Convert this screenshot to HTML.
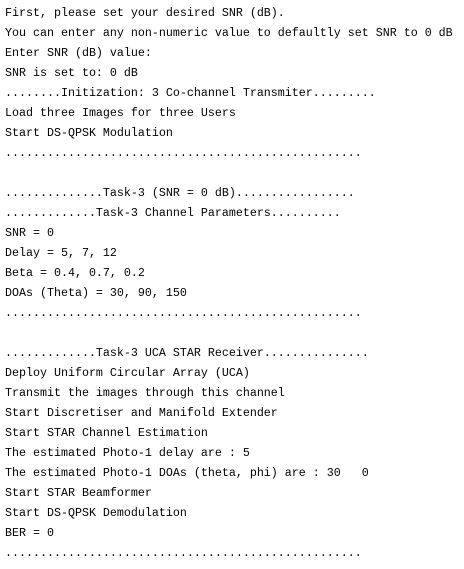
<!DOCTYPE html>
<html><head><style>
html,body{margin:0;padding:0;background:#fff;width:464px;height:569px;overflow:hidden}
pre{margin:0;padding:3px 0 0 5px;font-family:"Liberation Mono",monospace;font-size:11.67px;line-height:20px;color:#000}
</style></head><body><pre>First, please set your desired SNR (dB).
You can enter any non-numeric value to defaultly set SNR to 0 dB
Enter SNR (dB) value:
SNR is set to: 0 dB
........Initization: 3 Co-channel Transmiter.........
Load three Images for three Users
Start DS-QPSK Modulation
...................................................

..............Task-3 (SNR = 0 dB).................
.............Task-3 Channel Parameters..........
SNR = 0
Delay = 5, 7, 12
Beta = 0.4, 0.7, 0.2
DOAs (Theta) = 30, 90, 150
...................................................

.............Task-3 UCA STAR Receiver...............
Deploy Uniform Circular Array (UCA)
Transmit the images through this channel
Start Discretiser and Manifold Extender
Start STAR Channel Estimation
The estimated Photo-1 delay are : 5
The estimated Photo-1 DOAs (theta, phi) are : 30   0
Start STAR Beamformer
Start DS-QPSK Demodulation
BER = 0
...................................................</pre></body></html>
